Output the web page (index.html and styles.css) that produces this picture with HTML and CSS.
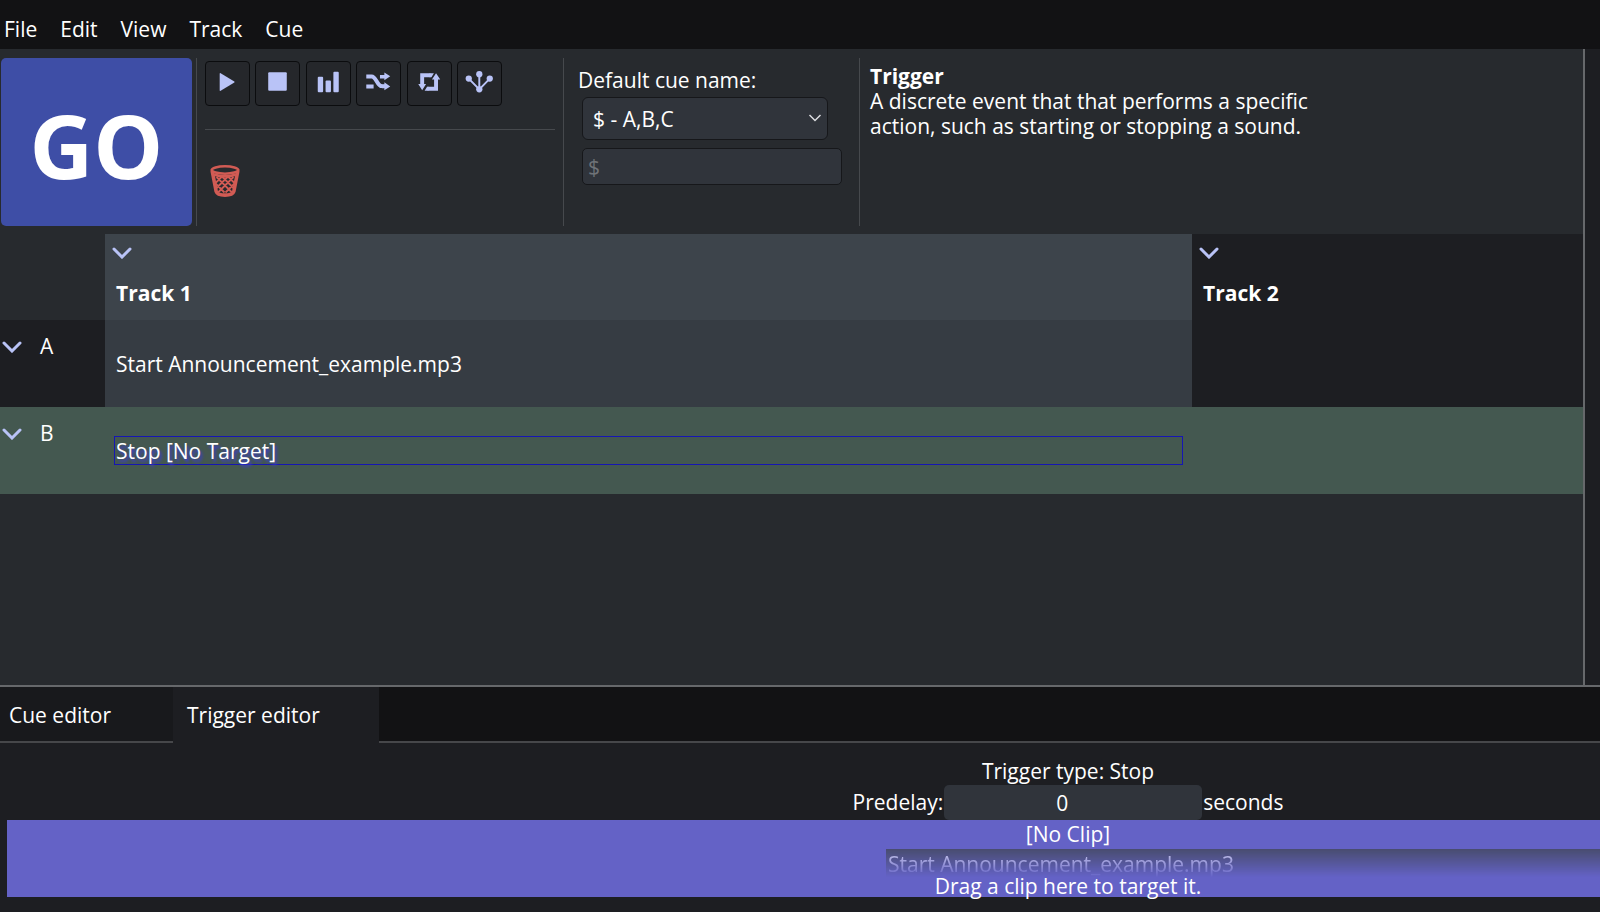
FILE: index.html
```html
<!DOCTYPE html>
<html lang="en">
<head>
<meta charset="utf-8">
<title>Cue editor</title>
<link rel="stylesheet" href="styles.css">
</head>
<body>
<nav class="menubar">
  <button class="menu">File</button>
  <button class="menu">Edit</button>
  <button class="menu">View</button>
  <button class="menu">Track</button>
  <button class="menu">Cue</button>
</nav>

<div class="workspace">
  <main class="main">
    <section class="toolbar">
      <button class="go">GO</button>
      <div class="tools">
        <div class="tool-row">
          <button class="tool" aria-label="Start"><svg viewBox="0 0 44 44"><path d="M14 12v17q0 1 1 .5l14-8.500q.6-.500 0-1L15 11.500q-1-.5-1 .5z"/></svg></button>
          <button class="tool" aria-label="Stop"><svg viewBox="0 0 44 44"><rect x="12.500" y="10.500" width="19" height="19" rx="1"/></svg></button>
          <button class="tool" aria-label="Volume"><svg viewBox="0 0 44 44"><rect x="11" y="15" width="5.500" height="16" rx="1"/><rect x="19" y="19" width="5.500" height="12" rx="1"/><rect x="27" y="10" width="5.500" height="21" rx="1"/></svg></button>
          <button class="tool" aria-label="Shuffle"><svg viewBox="0 0 44 44"><path d="M23.500 17V13.200h4.500v-2.500l6 4-6 4V17zM24 23.200h4v-2.500l6 4.300-6 4v-2.300h-5z"/><path class="line" d="M9.500 14.800H15c5 0 5 10 11 10h3M9.500 25H17"/></svg></button>
          <button class="tool" aria-label="Loop"><svg viewBox="0 0 44 44"><path d="M10.500 22.500h8l-4 6.500zM24.500 18h8.500l-4.300-6.500z"/><path class="line" d="M14.500 23.500V13.500H23M28.700 17v10.300H20"/><path d="M22 15.500h2l2.500-4H22zM21 25.300h-1.500l-2.500 4h4z"/></svg></button>
          <button class="tool" aria-label="Branch"><svg viewBox="0 0 44 44"><circle cx="11" cy="17" r="3.200"/><circle cx="21.800" cy="12.500" r="3.200"/><circle cx="32.500" cy="17" r="3.200"/><circle cx="21.800" cy="28" r="3.200"/><path class="thin" d="M11 17l10.800 11 10.700-11M21.800 12.500v15"/></svg></button>
        </div>
        <div class="trash-row">
          <button class="trash" aria-label="Delete"><svg viewBox="0 0 30 32"><g fill="none" stroke="currentColor"><ellipse cx="15" cy="5" rx="13.300" ry="3.700" stroke-width="2.600"/><path stroke-width="3.600" d="M2.200 6l4 20.500c1.500 4.800 16.100 4.800 17.600 0L27.800 6"/><path stroke-width="2.600" d="M4 9.500c6 2.500 16 2.500 22 0"/><path stroke-width="1.800" d="M4.500 17.500l10 10M6.500 12l15.500 15.500M12 11.500l12 12M18.500 12l7 7M25.500 17.500l-10 10M23.500 12L8 27.500M18 11.500l-12 12M11.500 12l-7 7"/></g></svg></button>
        </div>
      </div>
      <div class="naming">
        <label for="cue-name">Default cue name:</label>
        <div class="select-wrap">
          <select id="cue-name"><option>$ - A,B,C</option></select>
          <svg class="caret" viewBox="0 0 14 8"><path d="M1.500 1l5.500 5.500L12.500 1"/></svg>
        </div>
        <input class="pattern" type="text" placeholder="$" aria-label="Cue name pattern">
      </div>
      <div class="help">
        <strong>Trigger</strong>
        <p>A discrete event that that performs a specific action, such as starting or stopping a sound.</p>
      </div>
    </section>

    <table class="grid">
      <thead>
        <tr>
          <td class="corner"></td>
          <th class="track selected" scope="col"><button class="fold" aria-label="Track 1 menu"><svg viewBox="0 0 20 12"><path d="M2 2l8 8 8-8"/></svg></button><span>Track 1</span></th>
          <th class="track" scope="col"><button class="fold" aria-label="Track 2 menu"><svg viewBox="0 0 20 12"><path d="M2 2l8 8 8-8"/></svg></button><span>Track 2</span></th>
        </tr>
      </thead>
      <tbody>
        <tr>
          <th class="cue" scope="row"><div class="cue-label"><button class="fold" aria-label="Cue A menu"><svg viewBox="0 0 20 12"><path d="M2 2l8 8 8-8"/></svg></button><span>A</span></div></th>
          <td class="cell selected"><div class="trigger">Start Announcement_example.mp3</div></td>
          <td class="cell"></td>
        </tr>
        <tr class="current">
          <th class="cue" scope="row"><div class="cue-label"><button class="fold" aria-label="Cue B menu"><svg viewBox="0 0 20 12"><path d="M2 2l8 8 8-8"/></svg></button><span>B</span></div></th>
          <td class="cell"><div class="trigger focused">Stop [No Target]</div></td>
          <td class="cell"></td>
        </tr>
      </tbody>
    </table>
  </main>
  <aside class="side"></aside>
</div>

<section class="editor">
  <div class="tabs" role="tablist">
    <button class="tab" role="tab" aria-selected="false">Cue editor</button>
    <button class="tab active" role="tab" aria-selected="true">Trigger editor</button>
    <div class="tab-rest"></div>
  </div>
  <div class="panel">
    <div class="fields">
      <div class="type">Trigger type: Stop</div>
      <div class="predelay">
        <label for="predelay">Predelay:</label>
        <input id="predelay" type="text" value="0">
        <span>seconds</span>
      </div>
    </div>
    <div class="drop">
      <div>[No Clip]</div>
      <div class="hint">Drag a clip here to target it.</div>
      <div class="ghost">Start Announcement_example.mp3</div>
    </div>
  </div>
</section>
</body>
</html>
```
FILE: styles.css
```css
* { box-sizing: border-box; }

body {
  margin: 0;
  height: 100vh;
  display: flex;
  flex-direction: column;
  overflow: hidden;
  background: #1d1e22;
  color: #fff;
  font: 21px/25px "Open Sans", "Noto Sans", sans-serif;
}

button, input, select { font: inherit; color: inherit; }
button { border: 0; padding: 0; background: none; }
p { margin: 0; }
svg { display: block; }

.menubar {
  display: flex;
  gap: 23px;
  height: 49px;
  padding: 10px 4px 0;
  background: #121214;
}

.workspace { flex: 1; display: flex; min-height: 0; border-bottom: 2px solid #66686b; }
.main { flex: 1; background: #272a2e; border-right: 2px solid #66686b; }
.side { width: 15px; }

.toolbar { display: flex; height: 185px; padding: 9px 0 8px 1px; }
.go {
  width: 191px;
  border-radius: 5px;
  background: #3e4ea6;
  font-size: 88px;
  line-height: 90px;
  font-weight: 700;
  padding-top: 6px;
}
.tools {
  width: 368px;
  margin-left: 4px;
  padding: 3px 8px 0;
  border-left: 1px solid #46494d;
  border-right: 1px solid #46494d;
}
.tool-row { display: flex; justify-content: space-between; width: 297px; }
.tool {
  width: 45px;
  height: 45px;
  border: 1px solid #0b0c0e;
  border-radius: 4px;
  background: #25272b;
  color: #b9c3f7;
}
.tool svg { width: 43px; height: 43px; fill: currentColor; }
.tool .line { fill: none; stroke: currentColor; stroke-width: 4; }
.tool .thin { fill: none; stroke: currentColor; stroke-width: 2; }
.trash-row { margin-top: 23px; padding: 35px 5px 0; border-top: 1px solid #46494d; }
.trash { color: #d15b54; }
.trash svg { width: 30px; height: 32px; }

.naming {
  width: 296px;
  padding: 10px 15px 0 14px;
  border-right: 1px solid #46494d;
}
.naming label { display: block; }
.select-wrap { position: relative; width: 246px; margin: 4px 0 8px 4px; }
.select-wrap select {
  appearance: none;
  display: block;
  width: 100%;
  height: 43px;
  padding: 2px 10px 0;
  border: 1px solid #16171a;
  border-radius: 6px;
  background: #30343b;
}
.caret { position: absolute; right: 6px; top: 17px; width: 14px; height: 8px; fill: none; stroke: #dcdde0; stroke-width: 1.500; }
.pattern {
  display: block;
  width: 260px;
  height: 37px;
  margin-left: 4px;
  padding: 0 5px;
  border: 1px solid #16171a;
  border-radius: 5px;
  background: #30343b;
}
.pattern::placeholder { color: #6f7378; opacity: 1; }
.help { width: 460px; padding: 6px 10px 0; }
.help strong { display: block; }

.grid { width: 100%; border-collapse: collapse; table-layout: fixed; }
.grid td, .grid th { padding: 0; text-align: left; font-weight: 400; }
.grid thead tr { height: 86px; }
.grid tbody tr { height: 87px; }
.corner { width: 105px; }
.grid .track { vertical-align: top; padding: 13px 7px 0; background: #1d1e22; }
.grid .track.selected { width: 1087px; background: #3d444b; }
.track span { display: block; margin: 22px 4px 0; font-weight: 700; }
.fold svg { width: 20px; height: 12px; fill: none; stroke: #b9c3f7; stroke-width: 3; stroke-linecap: round; }
.fold { display: block; }
.cue { background: #1d1e22; vertical-align: top; }
.cue-label { display: flex; align-items: center; gap: 18px; padding: 14px 2px 0; }
.cell { background: #1d1e22; }
.cell.selected { background: #363c43; }
.current .cue, .current .cell { background: #445850; }
.trigger { margin: 0 9px; padding: 2px 1px 0; border: 1px solid transparent; }
.trigger.focused { border-color: #1616b4; text-shadow: 2px 3px 3px #3c3ccc; }

.tabs { display: flex; height: 56px; background: #121214; }
.tab { width: 173px; padding: 2px 9px 0; text-align: left; background: #18191c; border-bottom: 2px solid #46474a; }
.tab.active { width: 206px; padding: 2px 14px 0; background: #1d1e22; border-color: #1d1e22; }
.tab-rest { flex: 1; border-bottom: 2px solid #46474a; }

.panel { height: 169px; padding: 16px 0 0 7px; text-align: center; }
.fields, .drop { padding-left: 529px; }
.type { height: 25px; }
.predelay { display: flex; justify-content: center; align-items: center; gap: 1px; height: 36px; }
.predelay input {
  width: 258px;
  height: 35px;
  padding: 1px 22px 0 0;
  border: 0;
  border-radius: 5px;
  background: #30343b;
  text-align: center;
}
.predelay label, .predelay span { padding-top: 1px; }
.drop { position: relative; height: 77px; padding-top: 2px; background: #6462c6; }
.hint { margin-top: 27px; }
.ghost {
  position: absolute;
  left: 879px;
  right: 0;
  top: 29px;
  height: 28px;
  padding: 3px 2px 0;
  overflow: hidden;
  text-align: left;
  background: #3d444b;
  opacity: 0.7;
  mask-image: linear-gradient(#000, transparent);
}
```
